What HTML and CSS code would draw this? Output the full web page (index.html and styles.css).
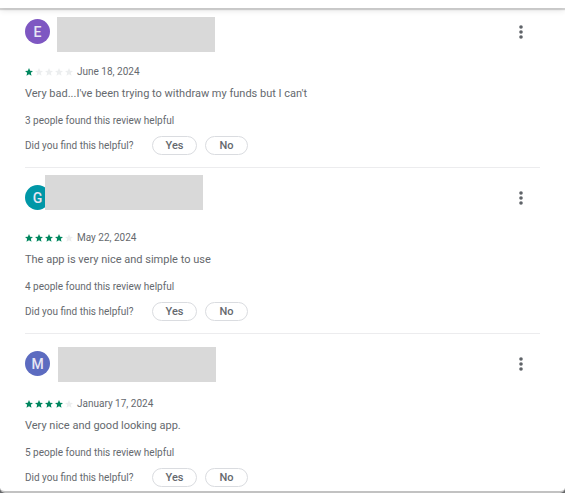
FILE: index.html
```html
<!DOCTYPE html>
<html lang="en">
<head>
<meta charset="utf-8">
<title>Ratings and reviews</title>
<link rel="stylesheet" href="styles.css">
</head>
<body>
<svg class="defs" aria-hidden="true">
  <symbol id="star" viewBox="0 0 24 24"><path d="M12 0l3.500 8 8.500.8-6.400 5.700 1.900 8.500L12 18.600 4.500 23l1.900-8.500L0 8.800 8.500 8z"/></symbol>
  <symbol id="more" viewBox="0 0 4 14"><circle cx="2" cy="2" r="1.800"/><circle cx="2" cy="7" r="1.800"/><circle cx="2" cy="12" r="1.800"/></symbol>
</svg>
<main class="sheet">
  <header class="sheet-header"></header>
  <article class="review">
    <div class="author">
      <span class="avatar purple">E</span>
      <span class="name-block"></span>
      <button class="more" type="button" aria-label="More options"><svg><use href="#more"/></svg></button>
    </div>
    <div class="meta">
      <span class="stars" role="img" aria-label="1 of 5 stars"><svg class="on"><use href="#star"/></svg><svg><use href="#star"/></svg><svg><use href="#star"/></svg><svg><use href="#star"/></svg><svg><use href="#star"/></svg></span>
      <time datetime="2024-06-18">June 18, 2024</time>
    </div>
    <p class="text">Very bad...I've been trying to withdraw my funds but I can't</p>
    <p class="count">3 people found this review helpful</p>
    <div class="vote"><span class="question">Did you find this helpful?</span><button class="pill" type="button">Yes</button><button class="pill" type="button">No</button></div>
  </article>
  <article class="review">
    <div class="author">
      <span class="avatar teal">G</span>
      <span class="name-block overlap"></span>
      <button class="more" type="button" aria-label="More options"><svg><use href="#more"/></svg></button>
    </div>
    <div class="meta">
      <span class="stars" role="img" aria-label="4 of 5 stars"><svg class="on"><use href="#star"/></svg><svg class="on"><use href="#star"/></svg><svg class="on"><use href="#star"/></svg><svg class="on"><use href="#star"/></svg><svg><use href="#star"/></svg></span>
      <time datetime="2024-05-22">May 22, 2024</time>
    </div>
    <p class="text">The app is very nice and simple to use</p>
    <p class="count">4 people found this review helpful</p>
    <div class="vote"><span class="question">Did you find this helpful?</span><button class="pill" type="button">Yes</button><button class="pill" type="button">No</button></div>
  </article>
  <article class="review">
    <div class="author">
      <span class="avatar indigo">M</span>
      <span class="name-block centered"></span>
      <button class="more" type="button" aria-label="More options"><svg><use href="#more"/></svg></button>
    </div>
    <div class="meta">
      <span class="stars" role="img" aria-label="4 of 5 stars"><svg class="on"><use href="#star"/></svg><svg class="on"><use href="#star"/></svg><svg class="on"><use href="#star"/></svg><svg class="on"><use href="#star"/></svg><svg><use href="#star"/></svg></span>
      <time datetime="2024-01-17">January 17, 2024</time>
    </div>
    <p class="text">Very nice and good looking app.</p>
    <p class="count">5 people found this review helpful</p>
    <div class="vote"><span class="question">Did you find this helpful?</span><button class="pill" type="button">Yes</button><button class="pill" type="button">No</button></div>
  </article>
</main>
</body>
</html>
```
FILE: styles.css
```css
* { box-sizing: border-box; }
body {
  margin: 0;
  background: #66686a;
  color: #65696e;
  font: 10px/16px Roboto, sans-serif;
}
.defs { position: absolute; width: 0; height: 0; }
.sheet {
  min-height: 100vh;
  background: #fff;
  border-bottom: 2px solid #c2c2c2;
  border-radius: 0 0 5px 5px;
}
.sheet-header {
  height: 8px;
  background: #fff;
  box-shadow: 0 2px 1px rgba(0, 0, 0, .15), 0 2px 6px rgba(0, 0, 0, .12);
}
.review {
  margin: 0 25px;
  padding: 17px 0 12px;
  border-bottom: 1px solid #ececee;
}
.sheet-header + .review { padding-top: 11px; }
.review:last-child { padding-bottom: 4px; border-bottom: 0; }
.author {
  position: relative;
  display: flex;
  align-items: center;
  justify-content: space-between;
  height: 25px;
  margin-bottom: 20px;
}
.avatar {
  width: 25px;
  height: 25px;
  border-radius: 50%;
  color: #e8e6f4;
  font-size: 14px;
  font-weight: 500;
  line-height: 27px;
  text-align: center;
}
.purple { background: #7e57c2; }
.teal { background: #0097a7; }
.indigo { background: #5c6bc0; }
/* Placeholder that hides the reviewer's name */
.name-block {
  position: absolute;
  top: -2px;
  left: 32px;
  width: 158px;
  height: 35px;
  background: #d9d9d9;
}
.name-block.overlap { top: -10px; left: 20px; }
.name-block.centered { top: -4px; left: 33px; }
.more {
  display: flex;
  justify-content: center;
  width: 38px;
  padding: 0;
  border: 0;
  background: none;
}
.more svg { width: 4px; height: 14px; fill: #5f6368; }
.meta { display: flex; align-items: center; height: 16px; margin-bottom: 5px; }
.stars { display: flex; gap: 2px; width: 52px; }
.stars svg { width: 8px; height: 8px; fill: #eceeef; }
.stars .on { fill: #01875f; }
.text { margin: 0 0 10px; font-size: 11px; line-height: 18px; }
.count { margin: 0 0 7px; }
.vote { display: flex; align-items: center; gap: 8px; }
.question { margin-right: 10px; }
.pill {
  height: 19px;
  padding: 0 13px;
  border: 1px solid #dadce0;
  border-radius: 10px;
  background: #fff;
  color: #65696e;
  font: 500 11px/17px Roboto, sans-serif;
}
```
